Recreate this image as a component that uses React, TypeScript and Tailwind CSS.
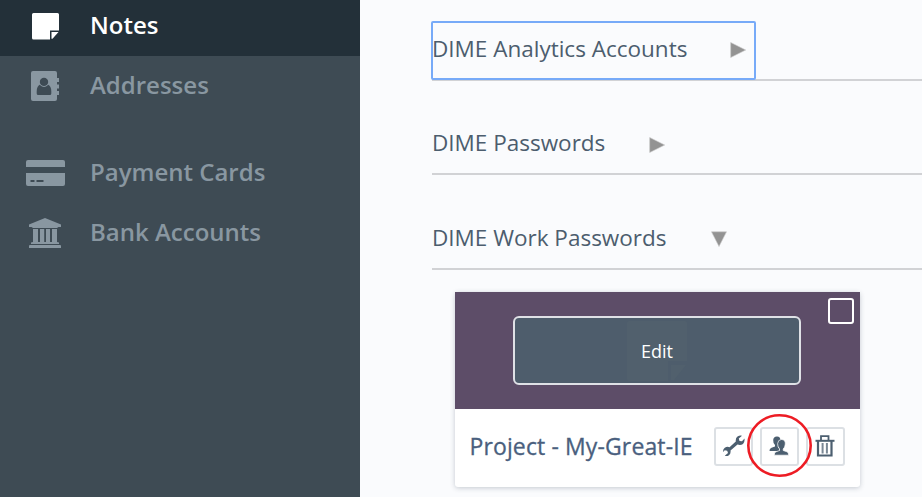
import type { ReactNode } from "react";

const FONT = "font-['Open_Sans','Noto_Sans',sans-serif]";

function NoteIcon() {
  return (
    <svg width="27" height="27" viewBox="0 0 27 27" fill="currentColor" className="ml-px">
      <path d="M1.500 0h24Q27 0 27 1.500V17.500H18V26.500H1.500Q0 26.500 0 25V1.500Q0 0 1.500 0Z" />
      <path d="M19.500 19H26.500L20.500 25.800H19.500Z" />
    </svg>
  );
}

function AddressIcon() {
  return (
    <svg width="28" height="30" viewBox="0 0 28 30" fill="currentColor">
      <path d="M2 0H24Q26 0 26 2V7H28V11H26V13.500H28V17.500H26V20H28V24H26V28Q26 30 24 30H2Q0 30 0 28V2Q0 0 2 0Z" />
      <g className="fill-[#3e4b54]">
        <path d="M9.200 13.500Q13 17.600 16.800 13.500Q20.300 14.800 20.300 20.500V22.500Q20.300 24 18.800 24H7.200Q5.700 24 5.700 22.500V20.500Q5.700 14.800 9.200 13.500Z" />
        <circle cx="13" cy="11" r="4.200" />
      </g>
      <path d="M9 13.500Q13 17.600 17 13.500" fill="none" stroke="currentColor" strokeWidth="0.900" />
    </svg>
  );
}

function CardIcon() {
  return (
    <svg width="39" height="26" viewBox="0 0 39 26" fill="currentColor" className="ml-px">
      <path d="M2 0H37Q39 0 39 2V7H0V2Q0 0 2 0Z" />
      <path fillRule="evenodd" d="M0 13H39V24Q39 26 37 26H2Q0 26 0 24ZM4.500 20V22H8.500V20ZM10.500 20V22H17.500V20Z" />
    </svg>
  );
}

function BankIcon() {
  return (
    <svg width="32" height="30" viewBox="0 0 32 30" fill="currentColor" className="-ml-px">
      <path d="M16 0L32 6.500V9H29.500L28 10H4L2.500 9H0V6.500Z" />
      <path d="M4 11H9V24H11V11H15.200V24H17V11H21V24H23V11H28V24L30 24.500V26H2V24.500L4 24Z" />
      <path d="M0 28Q0 27 1 27H31Q32 27 32 28V30H0Z" />
    </svg>
  );
}

function NavItem({ icon, label, active }: { icon: ReactNode; label: string; active?: boolean }) {
  return (
    <a
      className={`flex h-15 shrink-0 items-center text-[24px] leading-[58px] font-semibold ${
        active ? "bg-[#233039] text-white" : "text-[#8997a1]"
      }`}
    >
      <span className="flex w-[90px] justify-center">{icon}</span>
      <span className="h-15">{label}</span>
    </a>
  );
}

function Arrow({ open }: { open?: boolean }) {
  return (
    <svg width="16" height="16" viewBox="0 0 16 16" className="fill-[#939393] stroke-[#c8c8c8]" strokeWidth="0.600">
      <path d={open ? "M0.500 0.800H15.500L8 15.500Z" : "M0.700 0.500V15.500L15.700 8Z"} />
    </svg>
  );
}

function Group({ label, open, focused }: { label: string; open?: boolean; focused?: boolean }) {
  return (
    <div className="flex h-[94.5px] flex-col justify-end">
      <div className="flex h-[59px] border-b-2 border-[#d1d2d5]">
        <button
          className={`-mt-px -ml-px flex h-[59px] shrink-0 items-center border-2 text-[22.5px] text-[#4c5d6e] ${
            focused ? "relative w-[325px] gap-[43px] rounded-[2px] border-[#77aaf8]" : "gap-[44px] border-transparent"
          }`}
        >
          <span className="-mt-[3px] -ml-px whitespace-nowrap">{label}</span>
          <Arrow open={open} />
        </button>
      </div>
    </div>
  );
}

function WrenchIcon() {
  return (
    <svg width="22" height="22" viewBox="0 0 22 22" className="fill-[#4c5f70]">
      <path d="M14.500 1.500Q17 0 19 0.800L15.800 3.500L16.500 6L19 6.200L21.500 3.500Q22 7 20 9Q17.500 10.700 14.500 9.500L7.500 15.500Q8 18.500 6 20.200Q3.800 21.600 1.800 20.800L5 18L4.200 15.700L1.800 15.300L0 17Q-0.100 14 1.800 12.800Q4 11.300 6.500 12.200L12.800 6.500Q12.400 3 14.500 1.500Z" />
    </svg>
  );
}

function PeopleIcon() {
  return (
    <svg width="20" height="20" viewBox="0 0 20 20" className="-ml-px fill-[#4c5f70]">
      <path d="M7.800 0.500Q11.500 0.300 11.500 4.800Q11 8.500 9 10.200V11.500L10 12V15H0.500Q0.300 12.500 2.500 11.800L6 10.500V9Q4 7 4.200 4Q4.500 0.800 7.800 0.500Z" />
      <path
        d="M12.300 3.500Q16.600 3.500 16.300 8Q16 11.700 14.200 13V14.500L18 15.800Q19.700 16.500 19.700 19.200H5.300Q5 16.500 7 15.800L10.500 14.500V13Q8.400 10.500 8.600 7.600Q9 3.700 12.300 3.500Z"
        stroke="white"
        strokeWidth="0.700"
      />
    </svg>
  );
}

function TrashIcon() {
  return (
    <svg width="20" height="22" viewBox="0 0 20 22" fill="none" className="-ml-px stroke-[#4c5f70]">
      <path d="M0.500 5.800H19.500" strokeWidth="2" />
      <path d="M6 5V1.200H13.500V5" strokeWidth="1.800" />
      <path d="M3 6V20.500H16.500V6" strokeWidth="2.200" />
      <path d="M7.600 8V18.500M11.900 8V18.500" strokeWidth="2" strokeOpacity="0.750" />
    </svg>
  );
}

function Action({ children }: { children: ReactNode }) {
  return (
    <button className="flex size-[39px] items-center justify-center rounded-[3px] border-2 border-[#dce0e4] pb-px">
      {children}
    </button>
  );
}

export default function App() {
  return (
    <div className={`flex h-[497px] w-[922px] overflow-hidden bg-[#fafbfd] ${FONT}`}>
      <nav className="flex w-[360px] shrink-0 flex-col bg-[#3e4b54]">
        <div className="-mt-1 flex flex-col">
          <NavItem active icon={<NoteIcon />} label="Notes" />
          <NavItem icon={<AddressIcon />} label="Addresses" />
        </div>
        <div className="mt-[27px] flex flex-col">
          <NavItem icon={<CardIcon />} label="Payment Cards" />
          <NavItem icon={<BankIcon />} label="Bank Accounts" />
        </div>
      </nav>
      <main className="flex min-w-0 flex-1 flex-col pl-[72px]">
        <div className="-mt-[14px] flex flex-col">
          <Group focused label="DIME Analytics Accounts" />
          <Group label="DIME Passwords" />
          <Group open label="DIME Work Passwords" />
        </div>
        <section className="mt-[22px] ml-[23px] h-[195px] w-[405px] rounded-[3px] bg-white shadow-[0_1px_5px_rgba(40,55,75,0.25)]">
          <div className="relative flex h-[117px] items-center justify-center bg-[#5d4d68]">
            <button className="relative mt-px ml-[-1px] flex h-[69px] w-[288px] items-center justify-center rounded-[6px] border-2 border-[#dfe1e6] bg-[#4e5d6c] text-[18px] text-white">
              <svg width="60" height="60" viewBox="0 0 60 60" className="absolute top-[3px] left-[112px] fill-[#51606d]">
                <path d="M2 0H58Q60 0 60 2V40H41V60H2Q0 60 0 58V2Q0 0 2 0Z" />
                <path d="M44 44H59L47 59H44Z" />
              </svg>
              <span className="relative pt-0.5">Edit</span>
            </button>
            <span className="absolute top-[6px] right-[6px] size-[26px] rounded-[3px] border-2 border-white" />
          </div>
          <div className="relative flex h-[78px] items-center justify-between pr-[15px] pb-0.5 pl-[14.5px]">
            <span className="text-[23px] font-medium tracking-[0.120px] whitespace-nowrap text-[#4a5f7e] [-webkit-text-stroke:0.3px_#4a5f7e]">
              Project - My-Great-IE
            </span>
            <div className="flex gap-[7px]">
              <Action>
                <WrenchIcon />
              </Action>
              <Action>
                <PeopleIcon />
              </Action>
              <Action>
                <TrashIcon />
              </Action>
            </div>
            <svg width="66" height="64" viewBox="0 0 66 64" className="absolute top-[4px] left-[292px]">
              <ellipse cx="32.500" cy="32.500" rx="31.200" ry="30.200" fill="none" stroke="#ed1c24" strokeWidth="2.600" />
            </svg>
          </div>
        </section>
      </main>
    </div>
  );
}
